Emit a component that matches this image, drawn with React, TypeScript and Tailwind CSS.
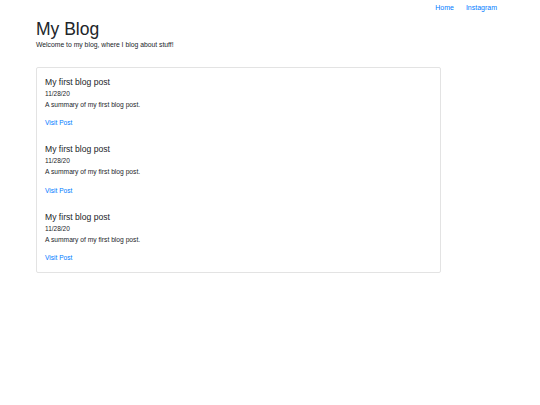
export default function App() {
  const posts = [1, 2, 3];
  return (
    <div className="w-[540px] h-[405px] bg-white text-[#212529]" style={{ fontFamily: '"Liberation Sans", Arial, sans-serif' }}>
      <nav className="flex justify-end gap-[12px] pr-[43px] pt-[3px] text-[7px] leading-[10px] text-[#007bff]">
        <a>Home</a>
        <a>Instagram</a>
      </nav>
      <div className="pl-[36px]">
        <h1 className="mt-[6px] text-[17.5px] leading-[20px] font-normal">My Blog</h1>
        <p className="mt-[1px] text-[6.8px] leading-[10px]">Welcome to my blog, where I blog about stuff!</p>
        <div className="mt-[17px] w-[405px] border border-[#e3e3e3] rounded-[2px] pl-[8px] pr-[8px] pt-[7.5px] pb-[8.5px]">
          {posts.map((p) => (
            <div key={p} className="mb-[15px] last:mb-0">
              <h5 className="text-[8.6px] leading-[12px]">My first blog post</h5>
              <h6 className="mt-[1px] text-[6.5px] leading-[10px]">11/28/20</h6>
              <p className="mt-[1px] text-[6.7px] leading-[10px]">A summary of my first blog post.</p>
              <a className="block mt-[8.5px] text-[6.6px] leading-[10px] text-[#007bff]">Visit Post</a>
            </div>
          ))}
        </div>
      </div>
    </div>
  );
}
